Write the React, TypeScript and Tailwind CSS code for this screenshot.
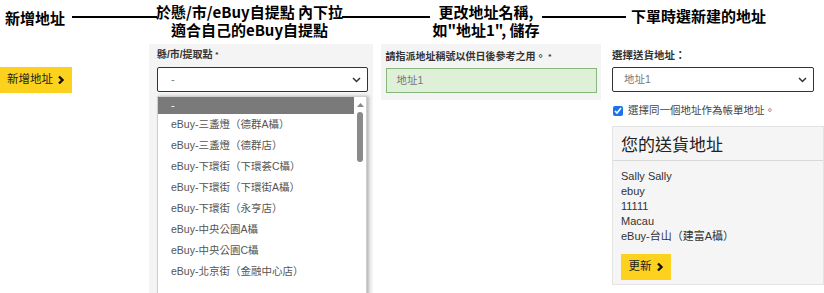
import React from "react";

const FONT = "font-['Liberation_Sans','Noto_Sans_CJK_TC',sans-serif]";
const HFONT = "font-['Noto_Sans_CJK_TC','Liberation_Sans',sans-serif]";

const Chevron = () => (
  <svg width="8" height="10" viewBox="0 0 8 10" className="ml-[4px]">
    <path d="M2 1.5 L5.5 5 L2 8.5" stroke="#111" strokeWidth="2.4" fill="none" />
  </svg>
);

const SelChevron = () => (
  <svg width="9" height="6" viewBox="0 0 9 6">
    <path d="M1 1 L4.5 4.5 L8 1" stroke="#333" strokeWidth="1.5" fill="none" />
  </svg>
);

const items = [
  "eBuy-三盞燈（德群A欇）",
  "eBuy-三盞燈（德群店）",
  "eBuy-下環街（下環荟C欇）",
  "eBuy-下環街（下環街A欇）",
  "eBuy-下環街（永亨店）",
  "eBuy-中央公園A欇",
  "eBuy-中央公園C欇",
  "eBuy-北京街（金融中心店）",
];

export default function App() {
  return (
    <div className={`w-[824px] h-[293px] overflow-hidden bg-white text-[#222] ${FONT}`}>
      {/* heading row */}
      <div className={`flex h-[44px] ${HFONT} font-bold text-[15px] leading-[18px] text-black`}>
        <div className="w-[72px] pl-[5px] pt-[9px] whitespace-nowrap">新增地址</div>
        <div className="w-[85px] h-[2px] bg-black mt-[16px]" />
        <div className="w-[185px] flex flex-col items-center pt-[3px] whitespace-nowrap">
          <div className="h-[18px]">於懸/市/eBuy自提點 內下拉</div>
          <div className="h-[18px]">適合自己的eBuy自提點</div>
        </div>
        <div className="w-[88px] h-[2px] bg-black mt-[16px]" />
        <div className="w-[112px] flex flex-col items-center pt-[3px] whitespace-nowrap">
          <div className="h-[18px]">更改地址名稱,</div>
          <div className="h-[18px]">如"地址1", 儲存</div>
        </div>
        <div className="w-[84px] h-[2px] bg-black mt-[16px]" />
        <div className="pl-[5px] pt-[7px] whitespace-nowrap">下單時選新建的地址</div>
      </div>

      {/* panels row */}
      <div className="flex">
        <div className="w-[150px] pt-[23px]">
          <div className="w-[72px] h-[26px] bg-[#fcd21e] flex items-center justify-center text-[11.5px] text-[#222]">
            新增地址
            <Chevron />
          </div>
        </div>

        <div className="w-[225px] h-[249px] bg-[#f4f4f4] pl-[8px] pt-[5px] overflow-hidden">
          <div className="text-[10px] leading-[12px] font-bold text-[#333]">
            縣/市/提取點 <span className="align-top text-[8px]">*</span>
          </div>
          <div className="mt-[6px] w-[211px] h-[25px] bg-white border-[1.5px] border-[#333] rounded-[2px] flex items-center justify-between pl-[13px] pr-[6px] text-[11px] text-[#777]">
            <span>-</span>
            <SelChevron />
          </div>
          <div className="mt-[4px] w-[210px] h-[210px] bg-white border border-[#cfcfcf] shadow-[2px_0_3px_rgba(0,0,0,0.25)] flex">
            <div className="flex-1">
              <div className="h-[17px] bg-[#7a7a7a] text-white text-[11px] leading-[17px] pl-[13px]">-</div>
              {items.map((t) => (
                <div key={t} className="h-[21px] leading-[21px] pl-[13px] text-[10.5px] text-[#555] whitespace-nowrap">
                  {t}
                </div>
              ))}
            </div>
            <div className="w-[12px] flex flex-col items-center pt-[6px]">
              <svg width="7" height="4" viewBox="0 0 7 4">
                <path d="M0 4 L3.5 0 L7 4 Z" fill="#888" />
              </svg>
              <div className="mt-[5px] w-[6px] h-[50px] bg-[#8a8a8a] rounded-full" />
            </div>
          </div>
        </div>

        <div className="w-[8px]" />

        <div className="w-[222px] h-[56px] bg-[#f4f4f4] pl-[5px] pt-[7px]">
          <div className="text-[10px] leading-[12px] font-bold text-[#333] whitespace-nowrap">
            請指派地址稱號以供日後參考之用。 <span className="align-top text-[8px]">*</span>
          </div>
          <div className="mt-[5px] w-[211px] h-[25px] bg-[#dff0d8] border border-[#86b77a] flex items-center pl-[10px] text-[10.5px] text-[#777]">
            地址1
          </div>
        </div>

        <div className="w-[11px]" />

        <div className="flex-1 pt-[5px]">
          <div className="text-[10.5px] leading-[12px] font-bold text-[#333]">選擇送貨地址：</div>
          <div className="mt-[6px] w-[202px] h-[25px] bg-white border-[1.5px] border-[#333] rounded-[2px] flex items-center justify-between pl-[11px] pr-[6px] text-[10.5px] text-[#777]">
            <span>地址1</span>
            <SelChevron />
          </div>
          <div className="mt-[13px] h-[12px] flex items-center text-[10.5px] text-[#444]">
            <input type="checkbox" checked readOnly className="w-[10px] h-[10px] m-0 ml-[1px] accent-[#1a73e8]" />
            <span className="ml-[5px] whitespace-nowrap">選擇同一個地址作為帳單地址。</span>
          </div>
          <div className="mt-[9px] w-[212px] h-[159px] bg-[#f5f5f5] border border-[#e3e3e3]">
            <div className={`pl-[8px] pt-[7px] text-[17px] leading-[20px] text-[#222] ${HFONT}`}>您的送貨地址</div>
            <div className="mt-[6px] h-px bg-[#d9d9d9]" />
            <div className="mt-[8px] pl-[8px] text-[11px] leading-[15px] text-[#333]">
              <div>Sally Sally</div>
              <div>ebuy</div>
              <div>11111</div>
              <div>Macau</div>
              <div>eBuy-台山（建富A欇）</div>
            </div>
            <div className="mt-[10px] ml-[8px] w-[50px] h-[26px] bg-[#fcd21e] flex items-center justify-center text-[11.5px] text-[#222]">
              更新
              <Chevron />
            </div>
          </div>
        </div>
      </div>
    </div>
  );
}
